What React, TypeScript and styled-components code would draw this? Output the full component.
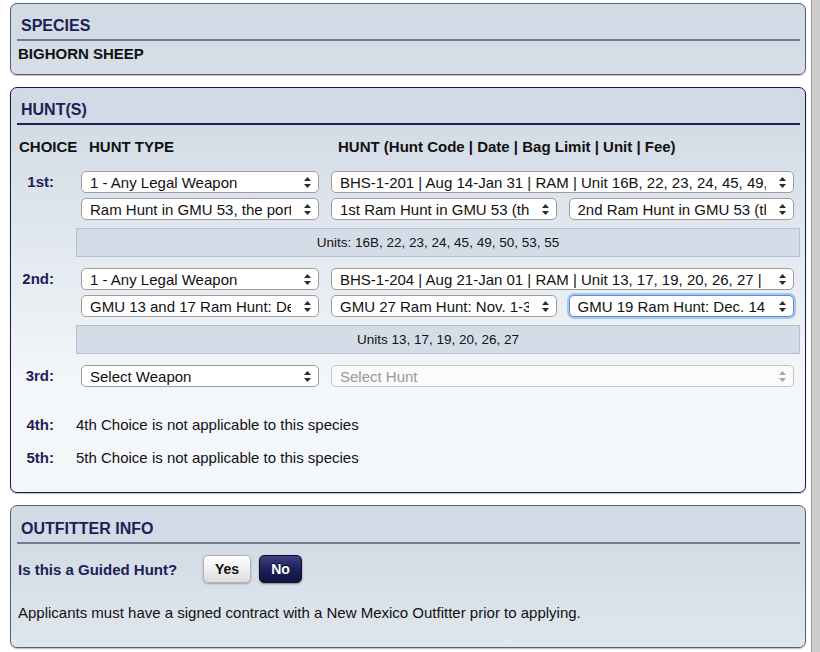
import React from 'react'
import styled, { createGlobalStyle, css } from 'styled-components'

const GlobalStyle = createGlobalStyle`
  html, body {
    margin: 0;
    padding: 0;
    background: #fff;
  }
  body {
    font-family: 'Liberation Sans', Arial, Helvetica, sans-serif;
    font-size: 15px;
    color: #111;
  }
`

const NAVY = '#1c2157'

const Page = styled.div`
  display: flex;
  width: 820px;
  height: 652px;
  overflow: hidden;
`

const Content = styled.div`
  flex: 1;
  padding: 3px 5px 0 10px;
  display: flex;
  flex-direction: column;
  gap: 12px;
`

const EdgeStrip = styled.div`
  width: 8px;
  background: #cdcdcd;
  border-left: 1px solid #9d9d9d;
`

const Panel = styled.section<{ active?: boolean; top?: number; bottom?: number }>`
  border: 1px solid ${(p) => (p.active ? '#151a4c' : '#565b76')};
  border-radius: 7px;
  background: linear-gradient(#d2dbe5 30px, #f4f7fa 300px);
  box-shadow: 0 1px 1px rgba(0, 0, 0, 0.25);
  padding: ${(p) => p.top ?? 12}px 5px ${(p) => p.bottom ?? 12}px 6px;
`

const PanelTitle = styled.h2<{ active?: boolean }>`
  margin: 0;
  padding: 0 0 3px 4px;
  font-size: 16px;
  line-height: 20px;
  font-weight: 700;
  color: ${NAVY};
  border-bottom: 2px solid ${(p) => (p.active ? NAVY : '#737a92')};
`

const SpeciesName = styled.div`
  margin-top: 4px;
  padding-left: 1px;
  font-weight: 700;
  font-size: 15px;
  line-height: 18px;
`

const HeaderRow = styled.div`
  display: flex;
  margin-top: 13px;
  padding-left: 2px;
  font-weight: 700;
  font-size: 15px;
  line-height: 18px;
`

const HeaderCell = styled.span<{ w?: number }>`
  ${(p) => p.w && css`width: ${p.w}px;`}
  flex: none;
`

const ChoiceList = styled.div`
  margin-top: 15px;
  display: flex;
  flex-direction: column;
  gap: 11px;
`

const ChoiceRow = styled.div<{ spaced?: number }>`
  display: grid;
  grid-template-columns: 37px 1fr;
  column-gap: 22px;
  align-items: start;
  ${(p) => p.spaced && css`margin-top: ${p.spaced}px;`}
`

const ChoiceLabel = styled.div`
  text-align: right;
  font-weight: 700;
  color: ${NAVY};
  line-height: 22px;
`

const ChoiceBody = styled.div`
  display: flex;
  flex-direction: column;
`

const SelectRow = styled.div<{ cols: number }>`
  display: grid;
  grid-template-columns: 238px ${(p) => (p.cols === 3 ? '1fr 1fr' : '1fr')};
  column-gap: 12px;
  padding: 0 6px 0 5px;
  & + & {
    margin-top: 5px;
  }
`

const SelectWrap = styled.div`
  position: relative;
  min-width: 0;
`

const StyledSelect = styled.select<{ focused?: boolean }>`
  appearance: none;
  -webkit-appearance: none;
  display: block;
  width: 100%;
  height: 22px;
  margin: 0;
  padding: 0 27px 0 8px;
  border: 1px solid #9c9c9c;
  border-radius: 5px;
  background: #fff;
  font-family: 'Liberation Sans', Arial, Helvetica, sans-serif;
  font-size: 15px;
  color: #111;
  outline: none;

  &:disabled {
    color: #9a9a9a;
    border-color: #c3c3c3;
    background: #fbfbfb;
    opacity: 1;
  }

  ${(p) => p.focused && css`
    border-color: #5b8cd4;
    box-shadow: 0 0 0 2px #aac8ef;
  `}
`

const Arrows = styled.svg<{ disabled?: boolean }>`
  position: absolute;
  right: 8px;
  top: 6px;
  width: 7px;
  height: 11px;
  pointer-events: none;
  fill: ${(p) => (p.disabled ? '#a8a8a8' : '#2a2a2a')};
`

const UnitsBox = styled.div`
  margin-top: 8px;
  height: 27px;
  display: flex;
  align-items: center;
  justify-content: center;
  background: #d4dde7;
  border: 1px solid #b3c1d2;
  font-size: 13.5px;
`

const NotApplicable = styled.div`
  line-height: 22px;
`

const GuidedRow = styled.div`
  display: flex;
  align-items: center;
  margin-top: 11px;
  padding-left: 1px;
`

const GuidedLabel = styled.span`
  font-weight: 700;
  color: ${NAVY};
  width: 185px;
`

const ToggleButton = styled.button<{ selected?: boolean }>`
  height: 28px;
  margin-right: 8px;
  padding: 0 11px;
  border-radius: 5px;
  font-family: 'Liberation Sans', Arial, Helvetica, sans-serif;
  font-size: 14px;
  font-weight: 700;
  cursor: pointer;
  ${(p) => (p.selected
    ? css`
      background: linear-gradient(#3b4184, #1a1e55 55%, #11143f);
      border: 1px solid #0c0f33;
      color: #fff;
      text-shadow: 0 -1px 0 #000;
      box-shadow: 0 1px 2px rgba(0, 0, 0, 0.4);
    `
    : css`
      background: linear-gradient(#ffffff, #ececec 60%, #dcdcdc);
      border: 1px solid #b4b4b4;
      color: #111;
      box-shadow: 0 1px 2px rgba(0, 0, 0, 0.3);
    `)}
`

const Notice = styled.p`
  margin: 21px 0 0;
  padding-left: 1px;
  line-height: 18px;
`

type SelectProps = {
  value: string;
  disabled?: boolean;
  focused?: boolean;
}

const Select = ({ value, disabled, focused }: SelectProps) => (
  <SelectWrap>
    <StyledSelect value={value} disabled={disabled} focused={focused} onChange={() => {}}>
      <option value={value}>{value}</option>
    </StyledSelect>
    <Arrows viewBox="0 0 7 11" disabled={disabled}>
      <path d="M3.5 0 L7 4 L0 4 Z" />
      <path d="M0 7 L7 7 L3.5 11 Z" />
    </Arrows>
  </SelectWrap>
)

type Choice = {
  label: string;
  weapon: string;
  hunt: string;
  huntDisabled?: boolean;
  details?: string[];
  focusedDetail?: number;
  units?: string;
}

const choices: Choice[] = [
  {
    label: '1st:',
    weapon: '1 - Any Legal Weapon',
    hunt: 'BHS-1-201 | Aug 14-Jan 31 | RAM | Unit 16B, 22, 23, 24, 45, 49, 50, 53, 55 | $0',
    details: [
      'Ram Hunt in GMU 53, the portion',
      '1st Ram Hunt in GMU 53 (the',
      '2nd Ram Hunt in GMU 53 (the',
    ],
    units: 'Units: 16B, 22, 23, 24, 45, 49, 50, 53, 55',
  },
  {
    label: '2nd:',
    weapon: '1 - Any Legal Weapon',
    hunt: 'BHS-1-204 | Aug 21-Jan 01 | RAM | Unit 13, 17, 19, 20, 26, 27 | $0',
    details: [
      'GMU 13 and 17 Ram Hunt: Dec',
      'GMU 27 Ram Hunt: Nov. 1-30',
      'GMU 19 Ram Hunt: Dec. 14, 2019',
    ],
    focusedDetail: 2,
    units: 'Units 13, 17, 19, 20, 26, 27',
  },
  {
    label: '3rd:',
    weapon: 'Select Weapon',
    hunt: 'Select Hunt',
    huntDisabled: true,
  },
]

const App = () => (
  <Page>
    <GlobalStyle />
    <Content>
      <Panel bottom={11}>
        <PanelTitle>SPECIES</PanelTitle>
        <SpeciesName>BIGHORN SHEEP</SpeciesName>
      </Panel>

      <Panel active bottom={23}>
        <PanelTitle active>HUNT(S)</PanelTitle>
        <HeaderRow>
          <HeaderCell w={70}>CHOICE</HeaderCell>
          <HeaderCell w={249}>HUNT TYPE</HeaderCell>
          <HeaderCell>HUNT (Hunt Code | Date | Bag Limit | Unit | Fee)</HeaderCell>
        </HeaderRow>
        <ChoiceList>
          {choices.map((c) => (
            <ChoiceRow key={c.label}>
              <ChoiceLabel>{c.label}</ChoiceLabel>
              <ChoiceBody>
                <SelectRow cols={2}>
                  <Select value={c.weapon} />
                  <Select value={c.hunt} disabled={c.huntDisabled} />
                </SelectRow>
                {c.details && (
                  <SelectRow cols={3}>
                    {c.details.map((d, i) => (
                      <Select key={d} value={d} focused={c.focusedDetail === i} />
                    ))}
                  </SelectRow>
                )}
                {c.units && <UnitsBox>{c.units}</UnitsBox>}
              </ChoiceBody>
            </ChoiceRow>
          ))}
          <ChoiceRow spaced={16}>
            <ChoiceLabel>4th:</ChoiceLabel>
            <NotApplicable>4th Choice is not applicable to this species</NotApplicable>
          </ChoiceRow>
          <ChoiceRow>
            <ChoiceLabel>5th:</ChoiceLabel>
            <NotApplicable>5th Choice is not applicable to this species</NotApplicable>
          </ChoiceRow>
        </ChoiceList>
      </Panel>

      <Panel top={13} bottom={25}>
        <PanelTitle>OUTFITTER INFO</PanelTitle>
        <GuidedRow>
          <GuidedLabel>Is this a Guided Hunt?</GuidedLabel>
          <ToggleButton type="button">Yes</ToggleButton>
          <ToggleButton type="button" selected>No</ToggleButton>
        </GuidedRow>
        <Notice>
          Applicants must have a signed contract with a New Mexico Outfitter prior to applying.
        </Notice>
      </Panel>
    </Content>
    <EdgeStrip />
  </Page>
)

export default App
